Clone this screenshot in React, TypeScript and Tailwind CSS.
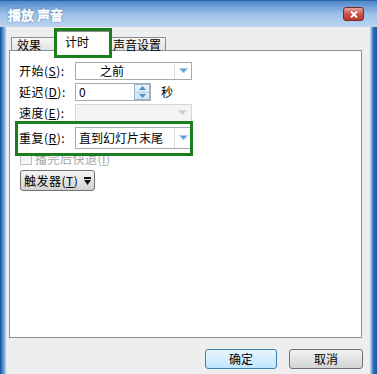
import React from 'react';

const FONT = 'font-["Noto_Sans_CJK_SC","Liberation_Sans",sans-serif]';

function DropArrow({ disabled }: { disabled?: boolean }) {
  return (
    <svg width="9" height="6" viewBox="0 0 9 6">
      <polygon
        points="0.5,0.5 8.5,0.5 4.5,5"
        fill={disabled ? '#cfcfcf' : '#5b9bd8'}
        stroke={disabled ? '#dcdcdc' : '#a9cdee'}
        strokeWidth="1"
      />
    </svg>
  );
}

function Combo({ text, indent, tall, disabled }: { text?: string; indent: string; tall?: boolean; disabled?: boolean }) {
  return (
    <div
      className={`flex w-[117px] ${tall ? 'h-[22px]' : 'h-[18px]'} border ${disabled ? 'border-[#d6d6d6] bg-[#f4f4f4]' : 'border-[#a7abb0] bg-white'}`}
    >
      <div className={`flex-1 flex items-center ${indent} text-[12px] leading-none text-black`}>{text}</div>
      <div className={`w-[17px] flex items-center justify-center ${disabled ? '' : 'border-l border-[#dcdcdc]'}`}>
        <DropArrow disabled={disabled} />
      </div>
    </div>
  );
}

function Label({ text, k }: { text: string; k: string }) {
  return (
    <div className="w-[56px] text-[12px] leading-none text-black whitespace-nowrap tracking-[0.5px]">
      {text}(<span className="underline">{k}</span>):
    </div>
  );
}

export default function App() {
  return (
    <div className={`w-[377px] h-[374px] overflow-hidden flex flex-col ${FONT}`}>
      {/* title bar */}
      <div className="h-[27px] flex items-center justify-between pl-[8px] pr-[13px] bg-gradient-to-b from-[#4d86c8] via-[#9cc1ea] to-[#bcd5ef] border-t border-[#2b64a8]">
        <span className="text-[13px] font-bold text-white leading-none [-webkit-text-stroke:0.5px_white] [text-shadow:0_0_2px_#1d4f8f,0_0_1px_#1d4f8f]">
          播放 声音
        </span>
        <div className="w-[21px] h-[14px] rounded-[3px] border border-[#7a2a24] bg-gradient-to-b from-[#e8a49b] via-[#c9534a] to-[#b8382e] flex items-center justify-center">
          <svg width="8" height="7" viewBox="0 0 8 7">
            <path d="M1 0.5 L7 6.5 M7 0.5 L1 6.5" stroke="white" strokeWidth="1.8" />
          </svg>
        </div>
      </div>

      <div className="flex flex-1">
        <div className="w-[6px] bg-gradient-to-r from-[#1c4f90] via-[#4a92dc] to-[#b6d2ee]" />

        <div className="flex-1 flex flex-col bg-[#eeeeee] pl-[3px] pr-[8px]">
          {/* tabs */}
          <div className="flex items-end h-[23px] pl-[2px] relative z-10">
            <div className="w-[45px] h-[13px] border-t border-l border-[#898c95] bg-gradient-to-b from-[#f6f6f6] to-[#e3e3e3] pl-[5px] text-[12px] leading-[13px] text-black">
              效果
            </div>
            <div className="relative w-[54px] h-[20px] -mb-px border-t border-l border-r border-[#898c95] bg-white pl-[8px] pt-[3px] text-[12px] leading-[13px] text-black">
              计时
              <div className="absolute -left-[3px] -right-[3px] -top-[4px] -bottom-[7px] border-[3px] border-[#1b7d1b]" />
            </div>
            <div className="w-[56px] h-[13px] border-t border-r border-[#898c95] bg-gradient-to-b from-[#f6f6f6] to-[#e3e3e3] pl-[3px] text-[12px] leading-[13px] text-black">
              声音设置
            </div>
          </div>

          {/* panel */}
          <div className="h-[288px] border border-[#8e9095] bg-white pl-[9px] pt-[11px] flex flex-col">
            <div className="flex items-center h-[18px]">
              <Label text="开始" k="S" />
              <Combo text="之前" indent="pl-[24px]" />
            </div>

            <div className="flex items-center h-[18px] mt-[3px]">
              <Label text="延迟" k="D" />
              <div className="flex w-[76px] h-[18px] border border-[#a7abb0] bg-white">
                <div className="flex-1 pl-[3px] flex items-center text-[12px] leading-none">0</div>
                <div className="w-[16px] flex flex-col border border-[#9bb8d6] bg-gradient-to-b from-[#eaf3fb] to-[#cfe3f5]">
                  <div className="flex-1 flex items-center justify-center border-b border-[#b5cde6]">
                    <svg width="7" height="4" viewBox="0 0 7 4">
                      <polygon points="0,4 7,4 3.5,0" fill="#4f8fd0" />
                    </svg>
                  </div>
                  <div className="flex-1 flex items-center justify-center">
                    <svg width="7" height="4" viewBox="0 0 7 4">
                      <polygon points="0,0 7,0 3.5,4" fill="#4f8fd0" />
                    </svg>
                  </div>
                </div>
              </div>
              <span className="ml-[10px] text-[12px] leading-none">秒</span>
            </div>

            <div className="flex items-center h-[18px] mt-[3px]">
              <Label text="速度" k="E" />
              <Combo indent="" disabled />
            </div>

            <div className="relative flex items-center w-[173px] h-[22px] mt-[5px]">
              <Label text="重复" k="R" />
              <Combo text="直到幻灯片末尾" indent="pl-[3px]" tall />
              <div className="absolute -left-[4px] -right-[1px] -top-[6px] -bottom-[7px] border-[3px] border-[#1b7d1b]" />
            </div>

            <div className="flex items-center h-[13px] mt-[3px] pl-[1px] gap-[3px]">
              <div className="w-[12px] h-[12px] border border-[#c2c2c2] bg-[#f4f4f4]" />
              <span className="text-[12px] leading-none text-[#a6a6a6] tracking-[0.5px]">
                播完后快退(<span className="underline">I</span>)
              </span>
            </div>

            <div className="mt-[5px] ml-[1px] w-[75px] h-[21px] rounded-[3px] border border-[#707070] bg-gradient-to-b from-[#f4f4f4] to-[#d2d2d2] flex items-center pl-[3px] gap-[6px]">
              <span className="text-[12px] leading-none text-black tracking-[0.5px]">
                触发器(<span className="underline">T</span>)
              </span>
              <svg width="7" height="8" viewBox="0 0 7 8">
                <rect x="0" y="0" width="7" height="2" fill="#111" />
                <polygon points="0,3 7,3 3.5,8" fill="#111" />
              </svg>
            </div>
          </div>

          {/* buttons */}
          <div className="flex justify-end gap-[12px] pt-[11px] -mr-[1px]">
            <div className="w-[72px] h-[20px] rounded-[3px] border border-[#3c7fb1] bg-gradient-to-b from-[#eaf6fd] to-[#bee6fd] flex items-center justify-center text-[12px] leading-none text-black">
              确定
            </div>
            <div className="w-[74px] h-[20px] rounded-[3px] border border-[#707070] bg-gradient-to-b from-[#f2f2f2] to-[#d4d4d4] flex items-center justify-center text-[12px] leading-none text-black">
              取消
            </div>
          </div>
        </div>

        <div className="w-[7px] bg-gradient-to-r from-[#c9ddf2] via-[#2d6cb6] to-[#1a58a4]" />
      </div>
    </div>
  );
}
